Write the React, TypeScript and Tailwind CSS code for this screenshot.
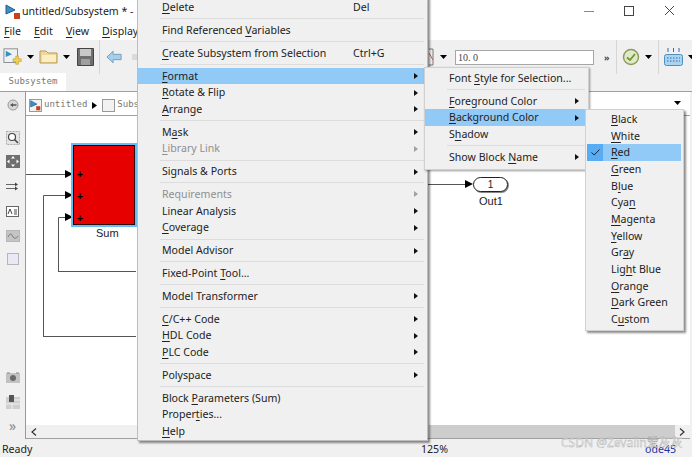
const ui = { fontFamily: '"Noto Sans", sans-serif' };
const mono = { fontFamily: '"DejaVu Sans Mono", monospace' };
const arial = { fontFamily: '"Liberation Sans", sans-serif' };

type Row = { label?: string; key?: string; sub?: boolean; off?: boolean; active?: boolean };

const mainMenu: Row[] = [
  { label: "&Delete", key: "Del" },
  {},
  { label: "Find Referenced &Variables" },
  {},
  { label: "&Create Subsystem from Selection", key: "Ctrl+G" },
  {},
  { label: "&Format", sub: true, active: true },
  { label: "&Rotate & Flip", sub: true },
  { label: "&Arrange", sub: true },
  {},
  { label: "M&ask", sub: true },
  { label: "&Library Link", sub: true, off: true },
  {},
  { label: "Signals & Ports", sub: true },
  {},
  { label: "Requirements", sub: true, off: true },
  { label: "Linear Analysis", sub: true },
  { label: "&Coverage", sub: true },
  {},
  { label: "Model Advisor", sub: true },
  {},
  { label: "Fixed-Point &Tool..." },
  {},
  { label: "Model Transformer", sub: true },
  {},
  { label: "&C/C++ Code", sub: true },
  { label: "&HDL Code", sub: true },
  { label: "&PLC Code", sub: true },
  {},
  { label: "Polyspace", sub: true },
  {},
  { label: "Block &Parameters (Sum)" },
  { label: "Proper&ties..." },
  { label: "&Help" },
];

const formatMenu: Row[] = [
  { label: "Font &Style for Selection..." },
  {},
  { label: "&Foreground Color", sub: true },
  { label: "&Background Color", sub: true, active: true },
  { label: "S&hadow" },
  {},
  { label: "Show Block &Name", sub: true },
];

const colors = [
  "&Black", "&White", "&Red", "&Green", "B&lue", "Cya&n", "&Magenta",
  "&Yellow", "Gr&ay", "Lig&ht Blue", "&Orange", "&Dark Green", "C&ustom",
];

function Mnemonic({ text }: { text: string }) {
  const i = text.indexOf("&");
  // "Rotate & Flip" style labels keep a literal ampersand (followed by a space)
  if (i < 0) return <>{text}</>;
  if (text[i + 1] === " ") {
    return (
      <>
        {text.slice(0, i + 2)}
        <Mnemonic text={text.slice(i + 2)} />
      </>
    );
  }
  return (
    <>
      {text.slice(0, i)}
      <u className="underline-offset-2">{text[i + 1]}</u>
      <Mnemonic text={text.slice(i + 2)} />
    </>
  );
}

function Arrow({ off }: { off?: boolean }) {
  return (
    <svg width="4" height="6" viewBox="0 0 4 6" className="shrink-0">
      <path d="M0 0 L4 3 L0 6 Z" fill={off ? "#a0a0a0" : "#111"} />
    </svg>
  );
}

function MenuRow({ row, pad, keyAt }: { row: Row; pad: string; keyAt?: string }) {
  if (!row.label) {
    return (
      <div className={`h-[6.3px] flex items-center pr-[3px] ${pad}`}>
        <div className="h-px flex-1 bg-[#dcdcdc] -ml-[2px]" />
      </div>
    );
  }
  return (
    <div
      className={`relative h-[16.6px] flex items-center justify-between pr-[9px] leading-none ${pad} ${
        row.active ? "bg-[#91c9f7]" : ""
      } ${row.off ? "text-[#8f8f8f]" : "text-[#222]"}`}
    >
      <span className="whitespace-nowrap">
        <Mnemonic text={row.label} />
      </span>
      {row.key && <span className={`${keyAt} top-[3px]`}>{row.key}</span>}
      {row.sub && <Arrow off={row.off} />}
    </div>
  );
}

function ToolSep() {
  return <div className="w-px h-[34px] bg-[#d6d6d6]" />;
}

function Caret() {
  return (
    <svg width="7" height="4" viewBox="0 0 7 4" className="shrink-0">
      <path d="M0 0 H7 L3.5 4 Z" fill="#000" />
    </svg>
  );
}

function ModelIcon({ size = 16 }: { size?: number }) {
  return (
    <svg width={size} height={size} viewBox="0 0 16 16" className="shrink-0">
      <path d="M1 1 L10 6 L1 10 Z" fill="#3a8fc4" stroke="#1f5f8c" strokeWidth="1" />
      <rect x="9" y="9" width="6" height="6" fill="#c8401c" />
    </svg>
  );
}

function Wires() {
  return (
    <svg width="460" height="305" viewBox="27 116 460 305" className="absolute left-0 top-0">
      <g fill="none" stroke="#555" strokeWidth="1">
        <path d="M27 174.5 H67" />
        <path d="M44.5 337 V195.5 H67" />
        <path d="M59.5 272 V217.5 H67" />
        <path d="M44.5 336.5 H137" />
        <path d="M59.5 271.5 H137" />
        <path d="M428 184.5 H467" />
      </g>
      <g fill="#000">
        <path d="M66 170 L74 174 L66 178 Z" />
        <path d="M66 191 L74 195 L66 199 Z" />
        <path d="M66 213 L74 217 L66 221 Z" />
        <path d="M466 180 L474 184 L466 188 Z" />
      </g>
    </svg>
  );
}

function SideTool({ children }: { children: React.ReactNode }) {
  return <div className="w-[26px] flex justify-center">{children}</div>;
}

export default function App() {
  return (
    <div
      className="relative w-[692px] h-[457px] overflow-hidden bg-[#f0f0f0] text-[10.6px] text-[#222] flex flex-col"
      style={ui}
    >
      {/* title + menu bar */}
      <div className="h-[40px] bg-white shrink-0 relative">
        <div className="flex items-center gap-[1px] h-[23px] pl-[5px] text-[#222]">
          <ModelIcon />
          <span className="whitespace-nowrap">untitled/Subsystem * -</span>
        </div>
        <div className="flex gap-[13px] pl-[4px] pt-[1px] h-[17px] items-center">
          <span><u className="underline-offset-2">F</u>ile</span>
          <span><u className="underline-offset-2">E</u>dit</span>
          <span><u className="underline-offset-2">V</u>iew</span>
          <span><u className="underline-offset-2">D</u>isplay</span>
        </div>
        {/* window buttons */}
        <div className="absolute top-[5px] right-[17px] flex items-center gap-[30px]">
          <svg width="10" height="10" viewBox="0 0 10 10"><path d="M0 5.5 H10" stroke="#888" /></svg>
          <svg width="10" height="10" viewBox="0 0 10 10"><rect x="0.5" y="0.5" width="9" height="9" fill="none" stroke="#444" /></svg>
          <svg width="11" height="11" viewBox="0 0 11 11"><path d="M1 1 L10 10 M10 1 L1 10" stroke="#444" /></svg>
        </div>
      </div>

      {/* toolbar */}
      <div className="h-[34px] shrink-0 flex items-center pl-[3px] relative">
        <svg width="20" height="20" viewBox="0 0 22 20" className="shrink-0">
          <rect x="1" y="1" width="15" height="15" fill="#eef2f5" stroke="#888" />
          <path d="M3 3 L10 7 L3 10 Z" fill="#3a8fc4" />
          <path d="M14 9 h3 v3 h3 v3 h-3 v3 h-3 v-3 h-3 v-3 h3 Z" fill="#f2cf4c" stroke="#b8942a" strokeWidth="0.6" />
        </svg>
        <div className="ml-[4px]"><Caret /></div>
        <svg width="20" height="16" viewBox="0 0 20 16" className="shrink-0 ml-[5px]">
          <path d="M1 2 H7 L9 4 H18 V14 H1 Z" fill="#f0d998" stroke="#b79b57" />
          <path d="M3 6 H17 V13 H3 Z" fill="#fbeec6" />
        </svg>
        <div className="ml-[4px]"><Caret /></div>
        <svg width="17" height="18" viewBox="0 0 17 18" className="shrink-0 ml-[7px]">
          <path d="M0.5 0.5 H16.5 V17.5 H0.5 Z" fill="#6f6f6f" stroke="#444" />
          <rect x="3" y="1" width="11" height="7" fill="#c9c9c9" />
          <rect x="4" y="11" width="9" height="6" fill="#a0a0a0" />
        </svg>
        <div className="ml-[5px]"><ToolSep /></div>
        <svg width="16" height="14" viewBox="0 0 18 15" className="shrink-0 ml-[6px]">
          <path d="M1 7.5 L8 1 V4.5 H17 V10.5 H8 V14 Z" fill="#a9cfe8" stroke="#6a9cbd" />
        </svg>
        <div className="w-[7px] h-[6px] bg-[#d9d9d9] ml-[10px]" />

        {/* right side of toolbar, past the open menu */}
        <div className="absolute left-[429px] top-0 h-[34px] flex items-center">
          <svg width="5" height="18" viewBox="0 0 5 18" className="shrink-0">
            <path d="M0 1 H4 V17 H0" fill="none" stroke="#777" />
            <path d="M0 5 L4 12" stroke="#d0574a" />
          </svg>
          <div className="ml-[6px]"><Caret /></div>
          <div
            className="ml-[8px] w-[139px] h-[15px] border border-[#a6a6a6] bg-white pl-[2px] flex items-center text-[10px] text-[#444] whitespace-pre"
            style={{ fontFamily: '"Liberation Serif", serif' }}
          >
            10. 0
          </div>
          <span className="ml-[10px] text-[9px] font-bold text-[#444] leading-none">»</span>
          <div className="ml-[6px]"><ToolSep /></div>
          <svg width="18" height="18" viewBox="0 0 18 18" className="shrink-0 ml-[5px]">
            <circle cx="9" cy="9" r="7.5" fill="#dfe8c8" stroke="#8a9a5a" strokeWidth="1.4" />
            <path d="M5 9.5 L8 12 L13 6" fill="none" stroke="#6f9a2a" strokeWidth="1.8" />
          </svg>
          <div className="ml-[5px]"><Caret /></div>
          <div className="ml-[6px]"><ToolSep /></div>
          <svg width="19" height="19" viewBox="0 0 19 19" className="shrink-0 ml-[5px]">
            <path d="M4 0 V4 M9.5 0 V4 M15 0 V4" stroke="#2d6ea8" />
            <rect x="0.5" y="6.5" width="18" height="11" rx="2" fill="#a9d3ef" stroke="#4f8fbf" />
            <path d="M3 10 H16 M3 13 H16" stroke="#2d6ea8" strokeDasharray="1.5 1.5" />
          </svg>
          <div className="ml-[5px]"><Caret /></div>
        </div>
      </div>

      {/* tab strip */}
      <div className="h-[18px] shrink-0 border-b border-[#a0a0a0] flex items-end">
        <div className="w-[66px] h-[18px] bg-white flex items-center justify-center text-[9px] text-[#777]" style={mono}>
          Subsystem
        </div>
      </div>

      {/* work area */}
      <div className="flex-1 flex min-h-0">
        <div className="w-[26px] shrink-0 flex flex-col items-center pt-[7px] border-r border-[#9a9a9a]">
          <SideTool>
            <svg width="12" height="12" viewBox="0 0 12 12">
              <circle cx="6" cy="6" r="5" fill="#d8d8d8" stroke="#999" />
              <path d="M3 6 L6 4 V8 Z M6 5.3 H9.5 V6.7 H6 Z" fill="#555" />
            </svg>
          </SideTool>
          <div className="mt-[20px]">
            <SideTool>
              <svg width="14" height="14" viewBox="0 0 14 14">
                <rect x="0.5" y="0.5" width="13" height="13" fill="#e4e4e4" stroke="#aaa" strokeDasharray="2 1" />
                <circle cx="6" cy="6" r="3.5" fill="#fff" stroke="#444" strokeWidth="1.2" />
                <path d="M8.5 8.5 L12 12" stroke="#444" strokeWidth="1.6" />
              </svg>
            </SideTool>
          </div>
          <div className="mt-[10px]">
            <SideTool>
              <svg width="14" height="13" viewBox="0 0 14 13">
                <rect x="0" y="0" width="14" height="13" fill="#6f6f6f" />
                <path d="M7 1 L9 3.5 H5 Z M7 12 L9 9.5 H5 Z M1 6.5 L3.5 4.5 V8.5 Z M13 6.5 L10.5 4.5 V8.5 Z" fill="#fff" />
              </svg>
            </SideTool>
          </div>
          <div className="mt-[14px]">
            <SideTool>
              <svg width="13" height="9" viewBox="0 0 13 9">
                <path d="M0 2.5 H10 M0 6.5 H10" stroke="#666" />
                <path d="M9 0.5 L12 2.5 L9 4.5 Z M9 4.5 L12 6.5 L9 8.5 Z" fill="#444" />
              </svg>
            </SideTool>
          </div>
          <div className="mt-[15px]">
            <SideTool>
              <svg width="13" height="11" viewBox="0 0 13 11">
                <rect x="0.5" y="0.5" width="12" height="10" fill="#fff" stroke="#666" />
                <path d="M2 8 L4 3 L6 8 M8 4 H11 M8 6 H11 M8 8 H11" fill="none" stroke="#444" />
              </svg>
            </SideTool>
          </div>
          <div className="mt-[13px]">
            <SideTool>
              <svg width="14" height="12" viewBox="0 0 14 12">
                <rect x="0" y="0" width="14" height="12" fill="#c4c4c4" stroke="#aaa" />
                <path d="M2 7 C4 3 5 3 6.5 6 S10 9 12 6" fill="none" stroke="#777" />
              </svg>
            </SideTool>
          </div>
          <div className="mt-[11px]">
            <SideTool>
              <div className="w-[12px] h-[12px] bg-[#e8e8f6] border border-[#b5b5b5]" />
            </SideTool>
          </div>
          <div className="flex-1" />
          <SideTool>
            <svg width="14" height="11" viewBox="0 0 14 11">
              <rect x="0" y="1" width="14" height="10" fill="#c2c2c2" />
              <circle cx="7" cy="6" r="3" fill="#6a6a6a" />
              <path d="M1 1 H4 M10 1 H13" stroke="#888" />
            </svg>
          </SideTool>
          <div className="mt-[12px]">
            <SideTool>
              <svg width="14" height="14" viewBox="0 0 14 14">
                <rect x="0" y="2" width="14" height="12" fill="#cfcfcf" />
                <rect x="3" y="0" width="5" height="7" fill="#555" />
                <path d="M8 5 H14 M0 9 H14 M6 9 V14" stroke="#f0f0f0" />
              </svg>
            </SideTool>
          </div>
          <div className="mt-[10px] mb-[6px] text-[14px] leading-none text-[#888]">»</div>
        </div>

        <div className="flex-1 flex flex-col min-w-0 mr-[2px]">
          {/* address bar */}
          <div className="h-[24px] shrink-0 flex items-center bg-white border-b border-[#a0a0a0] pt-[3px] pl-[3px] pr-[9px]">
            <div className="w-[13px] h-[13px] border border-[#999] bg-[#f2f2f2] flex items-center justify-center">
              <ModelIcon size={11} />
            </div>
            <span className="ml-[2px] text-[9px] text-[#777]" style={mono}>untitled</span>
            <svg width="5" height="7" viewBox="0 0 5 7" className="ml-[5px]">
              <path d="M0 0 L5 3.5 L0 7 Z" fill="#000" />
            </svg>
            <div className="ml-[5px] w-[13px] h-[13px] border border-[#999] bg-[#f2f2f2]" />
            <span className="ml-[2px] text-[9px] text-[#777]" style={mono}>Subs</span>
            <div className="flex-1" />
            <div className="-mt-[5px]"><Caret /></div>
          </div>

          {/* canvas */}
          <div className="relative flex-1 bg-white min-h-0 overflow-hidden">
            <Wires />
            <div className="absolute left-[45px] top-[27px] w-[66px] h-[84px] bg-[#67bdf5] p-[2px]">
              <div className="relative w-full h-full bg-[#e60000] border border-black/80">
                <span className="absolute left-[3px] top-[24px] text-[10px] font-bold leading-none text-black" style={arial}>+</span>
                <span className="absolute left-[3px] top-[46px] text-[10px] font-bold leading-none text-black" style={arial}>+</span>
                <span className="absolute left-[3px] top-[68px] text-[10px] font-bold leading-none text-black" style={arial}>+</span>
              </div>
            </div>
            <span className="absolute left-[70px] top-[111px] text-[11px] leading-[13px] text-[#222]" style={arial}>
              Sum
            </span>
            <div
              className="absolute left-[447px] top-[61px] w-[35px] h-[15px] bg-white border border-[#222] rounded-full flex items-center justify-center text-[10px] leading-none text-[#222] shadow-[1px_1px_0_#888]"
              style={arial}
            >
              1
            </div>
            <span className="absolute left-[453px] top-[79px] text-[11px] leading-[13px] text-[#222]" style={arial}>
              Out1
            </span>
          </div>

          {/* scrollbar */}
          <div className="h-[14px] shrink-0 bg-[#f0f0f0] border-b border-[#a0a0a0] flex items-center justify-between pl-[5px] pr-[3px] relative">
            <div className="absolute left-[403px] right-[15px] top-0 bottom-0 bg-[#cdcdcd]" />
            <svg width="6" height="8" viewBox="0 0 6 8"><path d="M5 0.5 L1 4 L5 7.5" fill="none" stroke="#333" strokeWidth="1.2" /></svg>
            <svg width="6" height="8" viewBox="0 0 6 8" className="relative -translate-x-[2px]"><path d="M1 0.5 L5 4 L1 7.5" fill="none" stroke="#333" strokeWidth="1.2" /></svg>
          </div>
        </div>
      </div>

      {/* status bar */}
      <div className="h-[18px] shrink-0 relative flex items-center pl-[2px] pt-[3px]">
        <span>Ready</span>
        <span className="absolute left-[421px]">125%</span>
        <span className="absolute left-[645px] text-[#2230a0]">ode45</span>
      </div>

      {/* watermark */}
      <span
        className="absolute left-[561px] top-[435px] text-[12px] leading-[16px] text-white/60 whitespace-nowrap"
        style={{ fontFamily: '"Noto Sans", "Noto Sans CJK SC", sans-serif', WebkitTextStroke: "0.4px #a8a8a8" }}
      >
        CSDN @Zevalin爱灰灰
      </span>

      {/* context menu */}
      <div className="absolute left-[137px] top-[-3px] w-[291px] bg-[#f0f0f0] border border-[#bdbdbd] shadow-[2px_2px_2px_rgba(0,0,0,0.45)] pt-px">
        {mainMenu.map((row, i) => (
          <MenuRow key={i} row={row} pad="pl-[24px]" keyAt="absolute left-[215px]" />
        ))}
      </div>

      {/* Format submenu */}
      <div className="absolute left-[424px] top-[67px] w-[165px] bg-[#f0f0f0] border border-[#d0d0d0] shadow-[1px_1px_2px_rgba(0,0,0,0.4)] pt-[2px] pb-[3px]">
        {formatMenu.map((row, i) => (
          <MenuRow key={i} row={row} pad="pl-[24px]" />
        ))}
      </div>

      {/* Background Color submenu */}
      <div className="absolute left-[585px] top-[109px] w-[99px] bg-[#f0f0f0] border border-[#d0d0d0] shadow-[2px_2px_2px_rgba(0,0,0,0.45)] pt-px pb-[2px] pl-px pr-[2px]">
        {colors.map((c) => (
          <div
            key={c}
            className={`h-[16.67px] flex items-center pl-[24px] leading-none relative text-[#222] ${
              c === "&Red" ? "bg-[#91c9f7]" : ""
            }`}
          >
            {c === "&Red" && (
              <div className="absolute left-0 top-0 bottom-0 w-[16px] bg-[#57acf3] flex items-center justify-center">
                <svg width="9" height="7" viewBox="0 0 9 7">
                  <path d="M0.5 3.5 L3.2 6 L8.5 0.5" fill="none" stroke="#222" strokeWidth="1" />
                </svg>
              </div>
            )}
            <span><Mnemonic text={c} /></span>
          </div>
        ))}
      </div>
    </div>
  );
}
